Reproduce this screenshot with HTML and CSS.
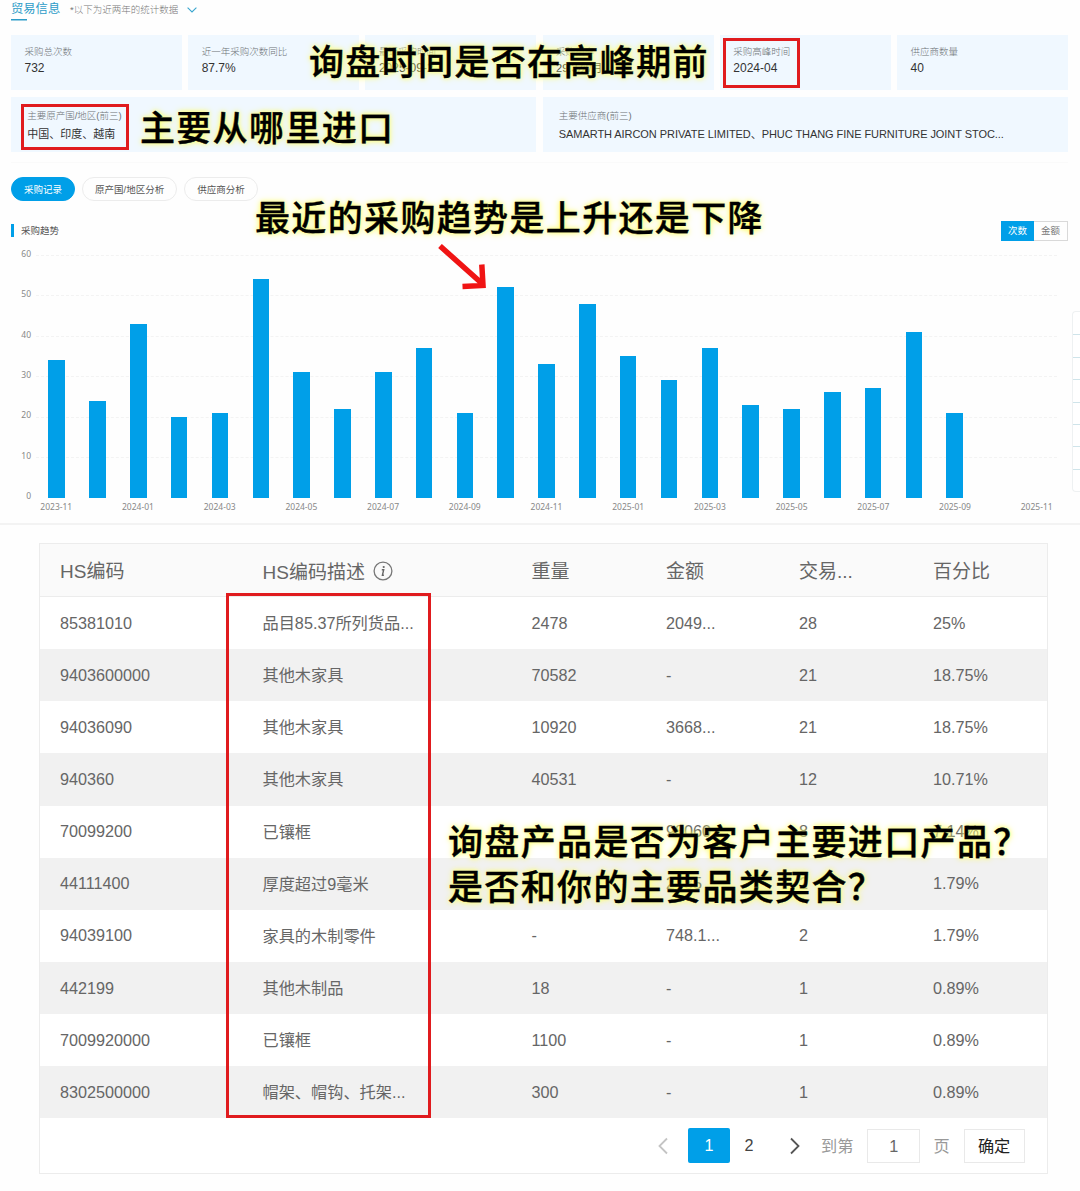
FILE: index.html
```html
<!DOCTYPE html>
<html lang="zh-CN">
<head>
<meta charset="utf-8">
<title>贸易信息</title>
<link rel="stylesheet" href="styles.css">
</head>
<body>
<section class="trade">
  <header class="trade-head">
    <h1 class="trade-title">贸易信息</h1>
    <span class="trade-note">*以下为近两年的统计数据</span>
    <svg class="chevron" viewBox="0 0 10 6" width="10" height="6"><path d="M.6.7 5 5 9.400.7" fill="none" stroke="#3aa6cf" stroke-width="1.1"/></svg>
  </header>
  <div class="cards">
    <div class="card"><span class="label">采购总次数</span><span class="value">732</span></div>
    <div class="card"><span class="label">近一年采购次数同比</span><span class="value">87.7%</span></div>
    <div class="card"><span class="label">最近采购时间</span><span class="value">2025-09-2</span></div>
    <div class="card"><span class="label">采购频率</span><span class="value mixed">29.3次/月</span></div>
    <div class="card"><span class="label">采购高峰时间</span><span class="value">2024-04</span></div>
    <div class="card"><span class="label">供应商数量</span><span class="value">40</span></div>
    <div class="card wide origin"><span class="label">主要原产国/地区(前三)</span><span class="value mixed">中国、印度、越南</span></div>
    <div class="card wide"><span class="label">主要供应商(前三)</span><span class="value mixed suppliers">SAMARTH AIRCON PRIVATE LIMITED、PHUC THANG FINE FURNITURE JOINT STOC...</span></div>
  </div>
  <nav class="tabs">
    <span class="tab active">采购记录</span>
    <span class="tab">原产国/地区分析</span>
    <span class="tab">供应商分析</span>
  </nav>
  <div class="chart-head">
    <h2 class="chart-title">采购趋势</h2>
    <div class="toggle"><span class="on">次数</span><span>金额</span></div>
  </div>
  <div class="chart">
    <div class="y-axis"><span>60</span><span>50</span><span>40</span><span>30</span><span>20</span><span>10</span><span>0</span></div>
    <div class="plot">
      <div class="lines"><i></i><i></i><i></i><i></i><i></i><i></i></div>
      <div class="bars">
        <b style="--v:34"></b><b style="--v:24"></b><b style="--v:43"></b><b style="--v:20"></b><b style="--v:21"></b>
        <b style="--v:54"></b><b style="--v:31"></b><b style="--v:22"></b><b style="--v:31"></b><b style="--v:37"></b>
        <b style="--v:21"></b><b style="--v:52"></b><b style="--v:33"></b><b style="--v:48"></b><b style="--v:35"></b>
        <b style="--v:29"></b><b style="--v:37"></b><b style="--v:23"></b><b style="--v:22"></b><b style="--v:26"></b>
        <b style="--v:27"></b><b style="--v:41"></b><b style="--v:21"></b><b style="--v:0"></b><b style="--v:0"></b>
      </div>
      <div class="x-axis"><span>2023-11</span><span>2024-01</span><span>2024-03</span><span>2024-05</span><span>2024-07</span><span>2024-09</span><span>2024-11</span><span>2025-01</span><span>2025-03</span><span>2025-05</span><span>2025-07</span><span>2025-09</span><span>2025-11</span></div>
    </div>
  </div>
  <aside class="side-tools"><i></i><i></i><i></i><i></i><i></i><i></i><i></i><i></i></aside>
</section>

<section class="hs">
  <div class="row head"><span>HS编码</span><span class="desc">HS编码描述
    <svg class="info" viewBox="0 0 20 20" width="20" height="20"><circle cx="10" cy="10" r="8.900" fill="none" stroke="#777" stroke-width="1.300"/><circle cx="10.700" cy="6" r="1.100" fill="#666"/><path d="M8.800 8.700h1.900L9.400 14.300h1.500" fill="none" stroke="#666" stroke-width="1.400"/></svg></span><span>重量</span><span>金额</span><span>交易...</span><span>百分比</span></div>
  <div class="row"><span>85381010</span><span class="name">品目85.37所列货品...</span><span>2478</span><span>2049...</span><span>28</span><span>25%</span></div>
  <div class="row"><span>9403600000</span><span class="name">其他木家具</span><span>70582</span><span>-</span><span>21</span><span>18.75%</span></div>
  <div class="row"><span>94036090</span><span class="name">其他木家具</span><span>10920</span><span>3668...</span><span>21</span><span>18.75%</span></div>
  <div class="row"><span>940360</span><span class="name">其他木家具</span><span>40531</span><span>-</span><span>12</span><span>10.71%</span></div>
  <div class="row"><span>70099200</span><span class="name">已镶框</span><span></span><span>98060</span><span>8</span><span>7.14%</span></div>
  <div class="row"><span>44111400</span><span class="name">厚度超过9毫米</span><span></span><span>2785</span><span>2</span><span>1.79%</span></div>
  <div class="row"><span>94039100</span><span class="name">家具的木制零件</span><span>-</span><span>748.1...</span><span>2</span><span>1.79%</span></div>
  <div class="row"><span>442199</span><span class="name">其他木制品</span><span>18</span><span>-</span><span>1</span><span>0.89%</span></div>
  <div class="row"><span>7009920000</span><span class="name">已镶框</span><span>1100</span><span>-</span><span>1</span><span>0.89%</span></div>
  <div class="row"><span>8302500000</span><span class="name">帽架、帽钩、托架...</span><span>300</span><span>-</span><span>1</span><span>0.89%</span></div>
  <footer class="pager">
    <svg class="prev" viewBox="0 0 10 18" width="10" height="18"><path d="M9 1.500 1.500 9 9 16.500" fill="none" stroke="#c4c4c4" stroke-width="1.800"/></svg>
    <span class="page current">1</span>
    <span class="page">2</span>
    <svg class="next" viewBox="0 0 10 18" width="10" height="18"><path d="M1 1.500 8.500 9 1 16.500" fill="none" stroke="#555" stroke-width="1.800"/></svg>
    <span class="hint">到第</span>
    <span class="field">1</span>
    <span class="hint">页</span>
    <span class="confirm">确定</span>
  </footer>
</section>

<div class="mark mark-peak"></div>
<div class="mark mark-origin"></div>
<div class="mark mark-desc"></div>
<p class="callout callout-peak">询盘时间是否在高峰期前</p>
<p class="callout callout-origin">主要从哪里进口</p>
<p class="callout callout-trend">最近的采购趋势是上升还是下降</p>
<p class="callout callout-product">询盘产品是否为客户主要进口产品？<br>是否和你的主要品类契合？</p>
<svg class="arrow" viewBox="0 0 50 46" width="50" height="46"><path d="M2 2 44 39.500M43.800 20.500 45 41.500 24.500 42.500" fill="none" stroke="#f01414" stroke-width="5.500"/></svg>
</body>
</html>
```
FILE: styles.css
```css
* { box-sizing: border-box; }
body {
  margin: 0;
  position: relative;
  width: 1080px;
  height: 1191px;
  overflow: hidden;
  background: #fefefe;
  color: #333;
  font-family: "Liberation Sans", "Noto Sans CJK SC", sans-serif;
}
h1, h2, p { margin: 0; font-weight: 400; }

/* trade summary */
.trade {
  position: relative;
  height: 525px;
  padding: 0 12px 0 11px;
  border-bottom: 2px solid #f3f3f3;
}
.trade-head { display: flex; align-items: center; height: 35px; padding-bottom: 15px; }
.trade-title {
  width: 49px;
  height: 21px;
  line-height: 18px;
  font-size: 12.3px;
  color: #2d9cc8;
  white-space: nowrap;
  background: linear-gradient(#2d9cc8, #2d9cc8) 0 100% / 16px 1.5px no-repeat;
}
.trade-note { margin-left: 10px; font-size: 9.5px; line-height: 18px; font-weight: 300; color: #777; white-space: nowrap; }
.chevron { margin-left: 9px; }
.cards {
  display: grid;
  grid-template-columns: repeat(6, 1fr);
  grid-auto-rows: 55px;
  gap: 7px 6.2px;
  padding-bottom: 10px;
  border-bottom: 1px solid #fafafa;
}
.card { display: flex; flex-direction: column; padding: 9px 0 0 13.5px; background: #f0f8ff; white-space: nowrap; min-width: 0; }
.card.wide { grid-column: span 3; padding: 11px 0 0 16.2px; }
.label { font-size: 9.5px; line-height: 15px; font-weight: 300; color: #6d7276; }
.value { font-size: 12px; line-height: 18px; color: #333; }
.value.mixed { font-size: 11px; }
.wide .value { line-height: 23px; }
.value.suppliers { letter-spacing: -0.06px; }

.tabs { display: flex; gap: 7px; margin-top: 14px; height: 24px; }
.tab {
  padding: 0 12px;
  line-height: 23px;
  font-size: 9.5px;
  color: #555;
  border: 1px solid #ececec;
  border-radius: 12px;
  white-space: nowrap;
}
.tab.active { background: #009fe8; border-color: #009fe8; color: #fff; }
.chart-head { display: flex; justify-content: space-between; align-items: center; margin-top: 19px; height: 21px; }
.chart-title { padding-left: 7px; border-left: 3px solid #009fe8; font-size: 9.5px; line-height: 13px; color: #555; }
.toggle { display: flex; border: 1px solid #d9d9d9; font-size: 9.5px; line-height: 18px; color: #777; }
.toggle span { width: 33px; text-align: center; }
.toggle .on { background: #009fe8; color: #fff; margin: -1px 0 -1px -1px; line-height: 20px; }

.chart { display: flex; margin-top: 14px; font-family: "Noto Sans", sans-serif; font-size: 8.5px; color: #888; }
.y-axis { display: flex; flex-direction: column; justify-content: space-between; width: 20px; height: 254px; margin-top: -7px; text-align: right; line-height: 12px; }
.plot { display: grid; grid-template-rows: 242.5px 18px; width: 1020.5px; margin-left: 5.300px; }
.lines { grid-area: 1 / 1; display: grid; grid-template-rows: repeat(6, 1fr); }
.lines i { border-top: 1px dashed #f3f3f3; }
.bars { grid-area: 1 / 1; display: grid; grid-template-columns: repeat(25, 1fr); align-items: end; justify-items: center; }
.bars b { width: 16.5px; height: calc(var(--v) * 100% / 60); background: #009fe8; }
.x-axis { display: flex; justify-content: space-between; padding-left: 4px; padding-right: 4px; line-height: 17px; white-space: nowrap; }

.side-tools {
  position: absolute;
  right: 0;
  top: 311px;
  width: 8px;
  height: 181px;
  display: grid;
  grid-template-rows: repeat(8, 1fr);
  border: 1px solid #eef1f2;
  border-right: 0;
  border-radius: 4px 0 0 4px;
  background: #fff;
}
.side-tools i + i { border-top: 1px solid #cfe4ea; }

/* HS code table */
.hs { width: 1009px; margin: 18px 0 0 39px; border: 1px solid #ececec; background: #fff; color: #666; }
.row {
  display: grid;
  grid-template-columns: 202.5px 269px 134.500px 133px 134px 1fr;
  align-items: center;
  height: 52.15px;
  padding-left: 20px;
  font-size: 16.2px;
  white-space: nowrap;
}
.row:nth-child(odd) { background: #f1f1f1; }
.row.head { height: 53px; padding-bottom: 2px; font-size: 19px; background: #fafafa; border-bottom: 1px solid #ececec; }
.row .name { padding-bottom: 2px; }
.desc { display: flex; align-items: center; gap: 8px; padding-top: 2px; }
.info { margin-top: 2px; }
.pager { display: flex; align-items: center; height: 55px; padding-left: 618px; font-size: 16.2px; }
.page { width: 38px; line-height: 35px; text-align: center; color: #444; }
.page.current { width: 42px; margin-left: 20px; border-radius: 2px; background: #009fe8; color: #fff; }
.next { margin-left: 22px; }
.hint { margin-left: 21px; padding-bottom: 2px; color: #999; }
.field { width: 53px; margin-left: 14px; border: 1px solid #e9e9e9; line-height: 32px; text-align: center; }
.field + .hint { margin-left: 13px; }
.confirm { width: 61px; margin-left: 14px; border: 1px solid #e9e9e9; line-height: 32px; text-align: center; color: #222; }

/* annotations over the page */
.mark { position: absolute; border: 3px solid #e01b1e; }
.mark-peak { left: 723px; top: 38px; width: 77px; height: 50px; }
.mark-origin { left: 21px; top: 104px; width: 108px; height: 46px; }
.mark-desc { left: 226px; top: 593px; width: 205px; height: 525px; }
.callout {
  position: absolute;
  font-family: "Noto Sans CJK SC", sans-serif;
  font-size: 35px;
  line-height: 44.5px;
  font-weight: 500;
  letter-spacing: 1.35px;
  color: #000;
  white-space: nowrap;
  -webkit-text-stroke: 0.4px #000;
  text-shadow: 0 0 4px #ffff6e, 0 0 7px #ffff6e;
}
.callout-peak { left: 309px; top: 38px; }
.callout-origin { left: 140px; top: 104px; }
.callout-trend { left: 255px; top: 194px; }
.callout-product { left: 448px; top: 818px; }
.arrow { position: absolute; left: 438px; top: 244px; }
```
